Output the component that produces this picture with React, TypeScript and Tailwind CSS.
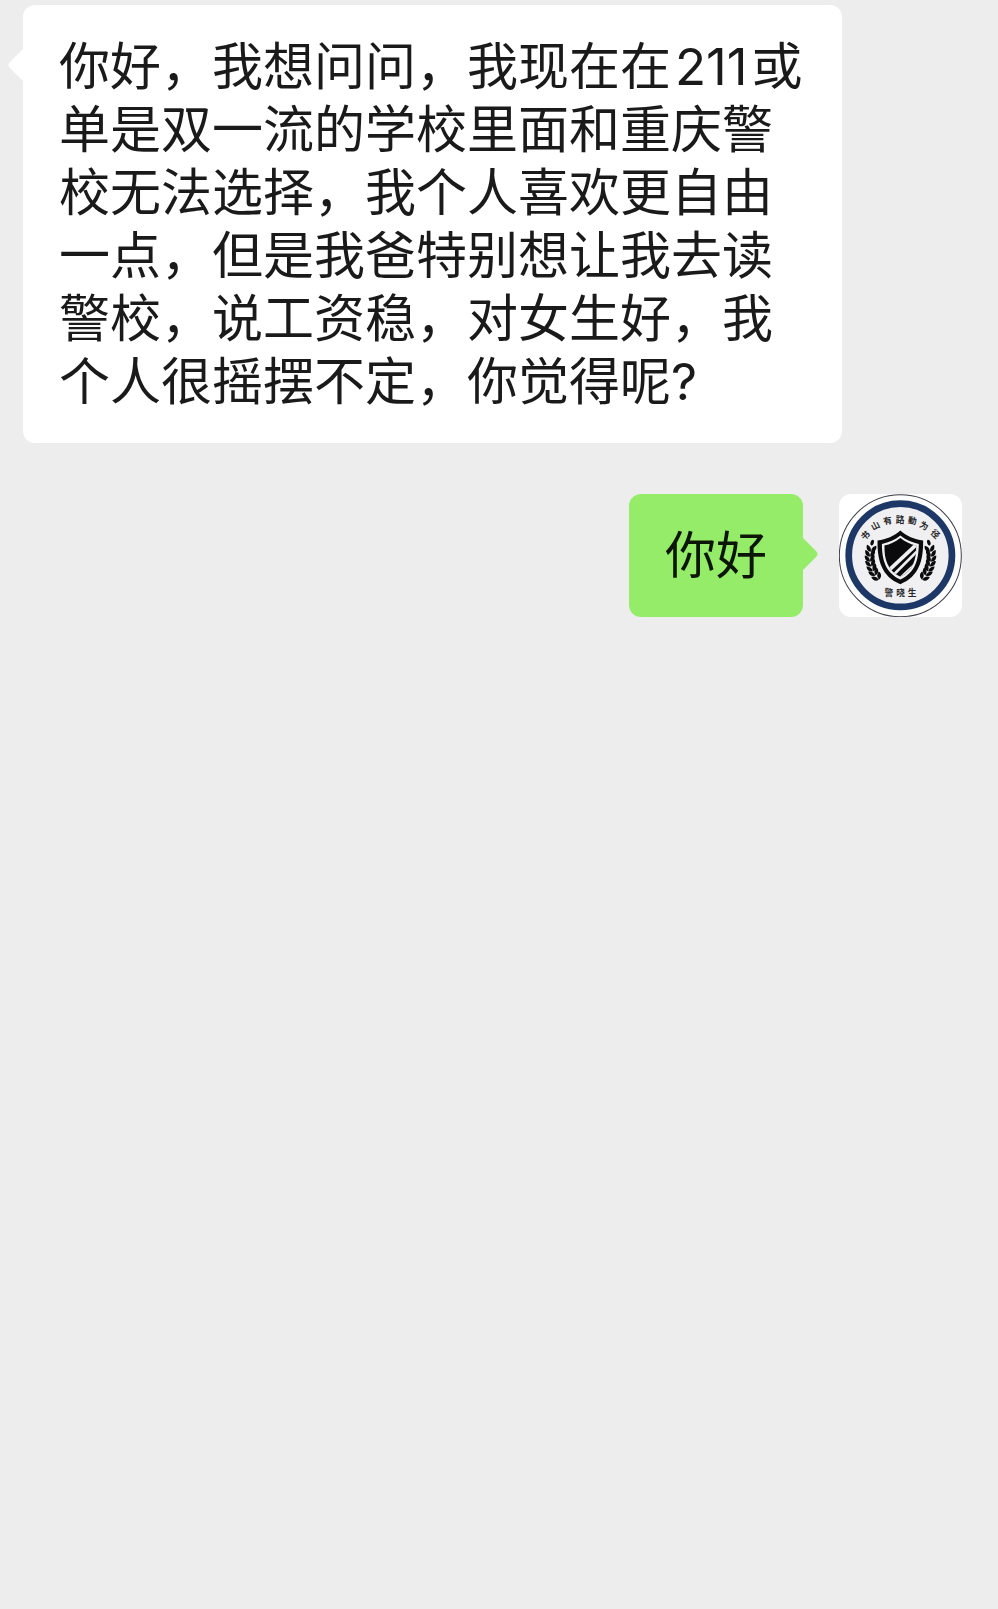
import type { ReactNode } from "react";

type Side = "left" | "right";

const MOTTO = [
  { char: "书", x: 106, y: 151, angle: -42 },
  { char: "山", x: 136, y: 122, angle: -28 },
  { char: "有", x: 172, y: 107, angle: -12 },
  { char: "路", x: 209, y: 103, angle: 0 },
  { char: "動", x: 246, y: 107, angle: 10 },
  { char: "为", x: 281, y: 122, angle: 28 },
  { char: "径", x: 314, y: 147, angle: 44 },
];

const NAME = [
  { char: "警", x: 176, y: 321, angle: 0 },
  { char: "晓", x: 211, y: 321, angle: 0 },
  { char: "生", x: 245, y: 321, angle: 0 },
];

const LEAVES = [
  { x: 120, y: 187, angle: 10 },
  { x: 116, y: 202, angle: 4 },
  { x: 115, y: 217, angle: -2 },
  { x: 117, y: 232, angle: -10 },
  { x: 121, y: 247, angle: -16 },
  { x: 127, y: 261, angle: -24 },
  { x: 136, y: 275, angle: -32 },
];

const Branch = () => (
  <g fill="#0b0b0d">
    <ellipse cx="126" cy="172" rx="5" ry="9" transform="rotate(20 126 172)" />
    {LEAVES.map((leaf) => (
      <g
        key={leaf.y}
        transform={`translate(${leaf.x} ${leaf.y}) rotate(${leaf.angle})`}
      >
        <path d="M4 12C-7 12-12 4-11-7C-3-6 4 0 4 12Z" />
        <path d="M5 12C3 1 8-6 17-9C21 1 16 10 5 12Z" />
      </g>
    ))}
  </g>
);

const Avatar = () => (
  <svg
    viewBox="27 27 367 367"
    className="size-[123px] shrink-0 rounded-xl bg-white"
    role="img"
    aria-label="警晓生"
  >
    <circle
      cx="210"
      cy="211"
      r="182"
      fill="#fdfdfe"
      stroke="#3c3f48"
      strokeWidth="3"
    />
    <circle
      cx="210"
      cy="210"
      r="154"
      fill="#f0f0f2"
      stroke="#1d3766"
      strokeWidth="20"
    />
    <g
      fill="#26262a"
      fontSize="26"
      fontWeight="700"
      textAnchor="middle"
      fontFamily="'Noto Sans CJK SC', sans-serif"
    >
      {[...MOTTO, ...NAME].map(({ char, x, y, angle }) => (
        <text key={char} transform={`translate(${x} ${y}) rotate(${angle})`} y="9">
          {char}
        </text>
      ))}
    </g>
    <Branch />
    <g transform="translate(421 0) scale(-1 1)">
      <Branch />
    </g>
    <path
      d="M210 136C192 152 168 163 142 166C141 224 154 274 210 296C266 274 279 224 278 166C252 163 228 152 210 136Z"
      fill="#0b0b0d"
    />
    <path
      d="M210 151C194 164 176 172 155 176C155 223 166 262 210 282C254 262 265 223 265 176C244 172 226 164 210 151Z"
      fill="#f0f0f2"
    />
    <clipPath id="shield">
      <path d="M210 158C195 170 180 177 162 181C162 222 172 256 210 274C248 256 258 222 258 181C240 177 225 170 210 158Z" />
    </clipPath>
    <g clipPath="url(#shield)">
      <path d="M150 150H270V280H150Z" fill="#0b0b0d" />
      <path
        d="M166 264L264 172"
        fill="none"
        stroke="#f0f0f2"
        strokeWidth="11"
      />
      <path
        d="M180 278L268 190"
        fill="none"
        stroke="#f0f0f2"
        strokeWidth="8"
      />
      <path
        d="M204 282L270 220"
        fill="none"
        stroke="#f0f0f2"
        strokeWidth="6"
      />
    </g>
  </svg>
);

const Tail = ({ side }: { side: Side }) => (
  <svg
    viewBox="0 0 16 34"
    className={
      side === "left"
        ? "absolute top-[43px] right-full -mr-px h-[34px] w-4 text-white"
        : "absolute top-[43px] left-full -ml-px h-[34px] w-4 -scale-x-100 text-[#95ec69]"
    }
    aria-hidden="true"
  >
    <path d="M16 0L2 14Q-1 17 2 20L16 34Z" fill="currentColor" />
  </svg>
);

const Bubble = ({ side, children }: { side: Side; children: ReactNode }) => (
  <div
    className={
      side === "left"
        ? "relative rounded-xl bg-white px-9 py-[30px] text-[#1a1a1a]"
        : "relative rounded-xl bg-[#95ec69] px-9 py-[30px] text-[#0c1606]"
    }
  >
    <Tail side={side} />
    <p className="text-[51px] leading-[63px]">{children}</p>
  </div>
);

const App = () => {
  return (
    <main className="flex min-h-screen flex-col gap-[51px] bg-[#ededed] pt-[5px] font-['Inter','Noto_Sans_CJK_SC',sans-serif]">
      <div className="flex pr-[156px] pl-[23px]">
        <Bubble side="left">
          你好，我想问问，我现在在<span className="mx-1">211</span>
          或单是双一流的学校里面和重庆警校无法选择，我个人喜欢更自由一点，但是我爸特别想让我去读警校，说工资稳，对女生好，我个人很摇摆不定，你觉得呢?
        </Bubble>
      </div>
      <div className="flex items-start justify-end gap-9 px-9">
        <Bubble side="right">你好</Bubble>
        <Avatar />
      </div>
    </main>
  );
};

export default App;
